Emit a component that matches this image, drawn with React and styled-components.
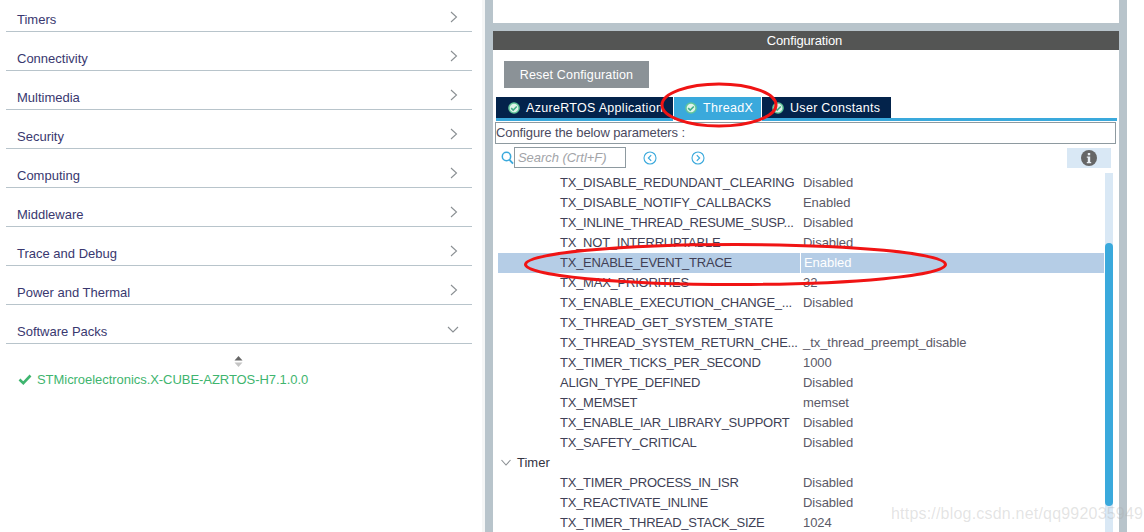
import React from "react";
import styled, { createGlobalStyle } from "styled-components";

const Global = createGlobalStyle`
  html, body { margin: 0; padding: 0; background: #fff; overflow: hidden; }
  #root { width: 1144px; height: 532px; overflow: hidden; }
  * { box-sizing: border-box; }
`;

const Page = styled.div`
  position: relative;
  display: flex;
  width: 1144px;
  height: 532px;
  background: #fff;
  font-family: "Liberation Sans", Arial, sans-serif;
  font-size: 13px;
  overflow: hidden;
`;
const LeftPanel = styled.div`
  width: 482px;
  padding: 0 10px 0 6px;
  background: #fff;
`;
const Strip = styled.div`
  width: 3px;
  background: #f5f6f6;
`;
const Gutter = styled.div`
  width: 8px;
  background: #b8c4cb;
`;
const Category = styled.div`
  display: flex;
  align-items: center;
  justify-content: space-between;
  height: 39px;
  padding: 14px 14px 0 11px;
  border-bottom: 1px solid #b8c4cb;
  color: #39386f;
  font-size: 13px;
  &:first-child { height: 32px; padding-top: 7px; }
`;
const PackArea = styled.div`
  display: flex;
  flex-direction: column;
`;
const Sorter = styled.svg`
  display: block;
  margin: 12px 0 0 228px;
`;
const PackRow = styled.div`
  display: flex;
  align-items: center;
  gap: 5px;
  margin: 5px 0 0 12px;
  color: #3fb56f;
  font-size: 13px;
  letter-spacing: -0.05px;
`;
const Center = styled.div`
  width: 626px;
  display: flex;
  flex-direction: column;
`;
const TopPane = styled.div`
  height: 23px;
  flex: none;
  background: #fff;
`;
const Band = styled.div`
  height: 8px;
  flex: none;
  background: #b8c4cb;
`;
const Header = styled.div`
  height: 19px;
  flex: none;
  padding-right: 3px;
  background: #545554;
  color: #fff;
  font-size: 13px;
  letter-spacing: -0.15px;
  line-height: 20px;
  text-align: center;
`;
const ConfigBody = styled.div`
  flex: 1;
  min-height: 0;
  display: flex;
  flex-direction: column;
  background: #fff;
`;
const ResetButton = styled.div`
  width: 145px;
  height: 27px;
  margin: 11px 0 0 11px;
  flex: none;
  background: #8b9297;
  color: #fff;
  font-size: 12.5px;
  letter-spacing: 0.15px;
  line-height: 28px;
  text-align: center;
`;
const Tabs = styled.div`
  display: flex;
  height: 24px;
  flex: none;
  margin: 9px 2px 0 3px;
  border-bottom: 3px solid #3aa9dc;
`;
const Tab = styled.div`
  width: ${(p) => p.$w}px;
  height: ${(p) => (p.$active ? 24 : 21)}px;
  display: flex;
  align-items: center;
  gap: 6px;
  padding-left: ${(p) => p.$pad}px;
  padding-bottom: ${(p) => (p.$active ? 2 : 0)}px;
  background: ${(p) => (p.$active ? "#3aa9dc" : "#03234b")};
  border-left: ${(p) => (p.$active ? "1px solid #fff" : "0")};
  border-right: ${(p) => (p.$active ? "1px solid #fff" : "0")};
  border-bottom: ${(p) => (p.$active ? "1px solid #fff" : "0")};
  color: #fff;
  font-size: 12.5px;
  letter-spacing: 0.3px;
  white-space: nowrap;
  overflow: hidden;
  position: relative;
  z-index: 1;
`;
const ParamNote = styled.div`
  height: 22px;
  flex: none;
  margin: 1px 3px 0 2px;
  border: 1px solid #8e9aa0;
  color: #4a4a60;
  font-size: 13px;
  letter-spacing: -0.1px;
  line-height: 20px;
`;
const SearchBar = styled.div`
  display: flex;
  align-items: center;
  height: 21px;
  flex: none;
  margin: 3px 8px 0 8px;
`;
const SearchInput = styled.div`
  width: 112px;
  height: 21px;
  padding-left: 3px;
  border: 1px solid #8e9aa0;
  color: #a2a4a8;
  font-size: 13px;
  font-style: italic;
  line-height: 19px;
  letter-spacing: -0.05px;
`;
const NavIcon = styled.svg`
  margin-left: ${(p) => p.$ml}px;
  flex: none;
`;
const InfoBox = styled.div`
  width: 44px;
  height: 20px;
  margin-left: auto;
  display: flex;
  align-items: center;
  justify-content: center;
  background: #d9e8f5;
`;
const ListArea = styled.div`
  flex: 1;
  min-height: 0;
  display: flex;
  margin: 5px 6px 0 5px;
`;
const List = styled.div`
  flex: 1;
  min-width: 0;
`;
const Row = styled.div`
  display: flex;
  height: 20px;
  padding-left: 62px;
  align-items: center;
  background: ${(p) => (p.$sel ? "#b5cde6" : "transparent")};
  color: #403f55;
  font-size: 13px;
`;
const Name = styled.div`
  width: 243px;
  flex: none;
  height: 100%;
  line-height: 20px;
  letter-spacing: -0.24px;
  white-space: nowrap;
`;
const Value = styled.div`
  flex: 1;
  height: 100%;
  line-height: 20px;
  padding-left: 3px;
  margin-left: -3px;
  letter-spacing: -0.05px;
  color: ${(p) => (p.$sel ? "#fff" : "#5b5a68")};
  border-left: ${(p) => (p.$sel ? "1px solid #fff" : "0")};
`;
const Group = styled.div`
  display: flex;
  align-items: center;
  gap: 6px;
  height: 20px;
  padding: 0 0 2px 3px;
  color: #33333f;
  font-size: 13px;
`;
const Track = styled.div`
  width: 8px;
  flex: none;
  margin-left: 1px;
  padding-top: 70px;
  background: #d9e8f5;
`;
const Thumb = styled.div`
  height: 263px;
  background: #3aa9dc;
  border-radius: 4px;
`;
const Annotation = styled.svg`
  position: absolute;
  left: 0;
  top: 0;
  z-index: 3;
  pointer-events: none;
`;
const Watermark = styled.div`
  position: absolute;
  left: 891px;
  top: 505px;
  z-index: 4;
  color: rgba(170, 170, 170, 0.32);
  font-size: 16px;
  letter-spacing: 0.2px;
  white-space: nowrap;
`;

const Chevron = () => (
  <svg width="8" height="12" viewBox="0 0 8 12" style={{ marginTop: -4 }}>
    <path d="M1 1l5.5 5L1 11" fill="none" stroke="#8a8f93" strokeWidth="1.1" />
  </svg>
);
const ChevronDown = ({ color = "#8a8f93", w = 12 }) => (
  <svg width={w} height="7" viewBox={`0 0 ${w} 7`}>
    <path d={w === 12 ? "M1 1l5 5 5-5" : "M.5 1l4.5 5 4.5-5"} fill="none" stroke={color} strokeWidth="1.1" />
  </svg>
);
const TabCheck = () => (
  <svg width="12" height="12" viewBox="0 0 12 12" style={{ flex: "none" }}>
    <circle cx="6" cy="6" r="5.8" fill="#62c69a" />
    <circle cx="6" cy="6" r="4.3" fill="#dff3ea" />
    <path d="M3.2 6.1l2 2L8.8 4.4" fill="none" stroke="#3fae86" strokeWidth="1.5" />
  </svg>
);

const cats = ["Timers", "Connectivity", "Multimedia", "Security", "Computing", "Middleware", "Trace and Debug", "Power and Thermal"];
const rowsA = [
  ["TX_DISABLE_REDUNDANT_CLEARING", "Disabled"],
  ["TX_DISABLE_NOTIFY_CALLBACKS", "Enabled"],
  ["TX_INLINE_THREAD_RESUME_SUSP...", "Disabled"],
  ["TX_NOT_INTERRUPTABLE", "Disabled"],
  ["TX_ENABLE_EVENT_TRACE", "Enabled", true],
  ["TX_MAX_PRIORITIES", "32"],
  ["TX_ENABLE_EXECUTION_CHANGE_...", "Disabled"],
  ["TX_THREAD_GET_SYSTEM_STATE", ""],
  ["TX_THREAD_SYSTEM_RETURN_CHE...", "_tx_thread_preempt_disable"],
  ["TX_TIMER_TICKS_PER_SECOND", "1000"],
  ["ALIGN_TYPE_DEFINED", "Disabled"],
  ["TX_MEMSET", "memset"],
  ["TX_ENABLE_IAR_LIBRARY_SUPPORT", "Disabled"],
  ["TX_SAFETY_CRITICAL", "Disabled"],
];
const rowsB = [
  ["TX_TIMER_PROCESS_IN_ISR", "Disabled"],
  ["TX_REACTIVATE_INLINE", "Disabled"],
  ["TX_TIMER_THREAD_STACK_SIZE", "1024"],
];

const ParamRow = ({ r }) => (
  <Row $sel={r[2]}>
    <Name>{r[0]}</Name>
    <Value $sel={r[2]}>{r[1]}</Value>
  </Row>
);

export default function App() {
  return (
    <Page>
      <Global />
      <LeftPanel>
        {cats.map((c) => (
          <Category key={c}>
            <span>{c}</span>
            <Chevron />
          </Category>
        ))}
        <Category>
          <span>Software Packs</span>
          <span style={{ marginTop: -3, marginRight: -1, display: "flex" }}><ChevronDown /></span>
        </Category>
        <PackArea>
          <Sorter width="9" height="11" viewBox="0 0 9 11">
            <path d="M4.5 0L8.5 4.5H.5z" fill="#666" />
            <path d="M4.5 11L.5 6.5h8z" fill="#c4c4c4" />
          </Sorter>
          <PackRow>
            <svg width="14" height="11" viewBox="0 0 14 11">
              <path d="M1.5 5.5l3.8 3.6L12.5 1.5" fill="none" stroke="#3fb56f" strokeWidth="2.6" />
            </svg>
            <span>STMicroelectronics.X-CUBE-AZRTOS-H7.1.0.0</span>
          </PackRow>
        </PackArea>
      </LeftPanel>
      <Strip />
      <Gutter />
      <Center>
        <TopPane />
        <Band />
        <Header>Configuration</Header>
        <ConfigBody>
          <ResetButton>Reset Configuration</ResetButton>
          <Tabs>
            <Tab $w={177} $pad={12}><TabCheck />AzureRTOS Application</Tab>
            <Tab $w={89} $pad={11} $active><TabCheck />ThreadX</Tab>
            <Tab $w={129} $pad={10}><TabCheck />User Constants</Tab>
          </Tabs>
          <ParamNote>Configure the below parameters :</ParamNote>
          <SearchBar>
            <svg width="13" height="14" viewBox="0 0 13 14" style={{ flex: "none" }}>
              <circle cx="5.5" cy="5.5" r="4.2" fill="none" stroke="#3aa9dc" strokeWidth="1.5" />
              <path d="M8.5 8.8L12 12.6" stroke="#3aa9dc" strokeWidth="1.8" />
            </svg>
            <SearchInput>Search (Crtl+F)</SearchInput>
            <NavIcon $ml={17} width="14" height="14" viewBox="0 0 14 14">
              <circle cx="7" cy="7" r="6" fill="none" stroke="#3aa9dc" strokeWidth="1.1" />
              <path d="M8.2 4.2L5.4 7l2.8 2.8" fill="none" stroke="#3aa9dc" strokeWidth="1.2" />
            </NavIcon>
            <NavIcon $ml={34} width="14" height="14" viewBox="0 0 14 14">
              <circle cx="7" cy="7" r="6" fill="none" stroke="#3aa9dc" strokeWidth="1.1" />
              <path d="M5.8 4.2L8.6 7l-2.8 2.8" fill="none" stroke="#3aa9dc" strokeWidth="1.2" />
            </NavIcon>
            <InfoBox>
              <svg width="16" height="16" viewBox="0 0 16 16">
                <circle cx="8" cy="8" r="8" fill="#666" />
                <rect x="6.8" y="3" width="2.4" height="2.3" fill="#e8eef3" />
                <path d="M5.8 6.6H9.2V12H10.2V13.2H5.8V12H6.8V7.8H5.8z" fill="#e8eef3" />
              </svg>
            </InfoBox>
          </SearchBar>
          <ListArea>
            <List>
              {rowsA.map((r) => <ParamRow key={r[0]} r={r} />)}
              <Group>
                <ChevronDown w={10} color="#8a8f93" />
                Timer
              </Group>
              {rowsB.map((r) => <ParamRow key={r[0]} r={r} />)}
            </List>
            <Track><Thumb /></Track>
          </ListArea>
        </ConfigBody>
      </Center>
      <Gutter />
      <Annotation width="1144" height="532" viewBox="0 0 1144 532">
        <ellipse cx="719" cy="105" rx="57" ry="21" fill="none" stroke="#f01414" strokeWidth="3" />
        <ellipse cx="735.5" cy="264.5" rx="210" ry="20" fill="none" stroke="#f01414" strokeWidth="3" />
      </Annotation>
      <Watermark>https://blog.csdn.net/qq992035949</Watermark>
    </Page>
  );
}
